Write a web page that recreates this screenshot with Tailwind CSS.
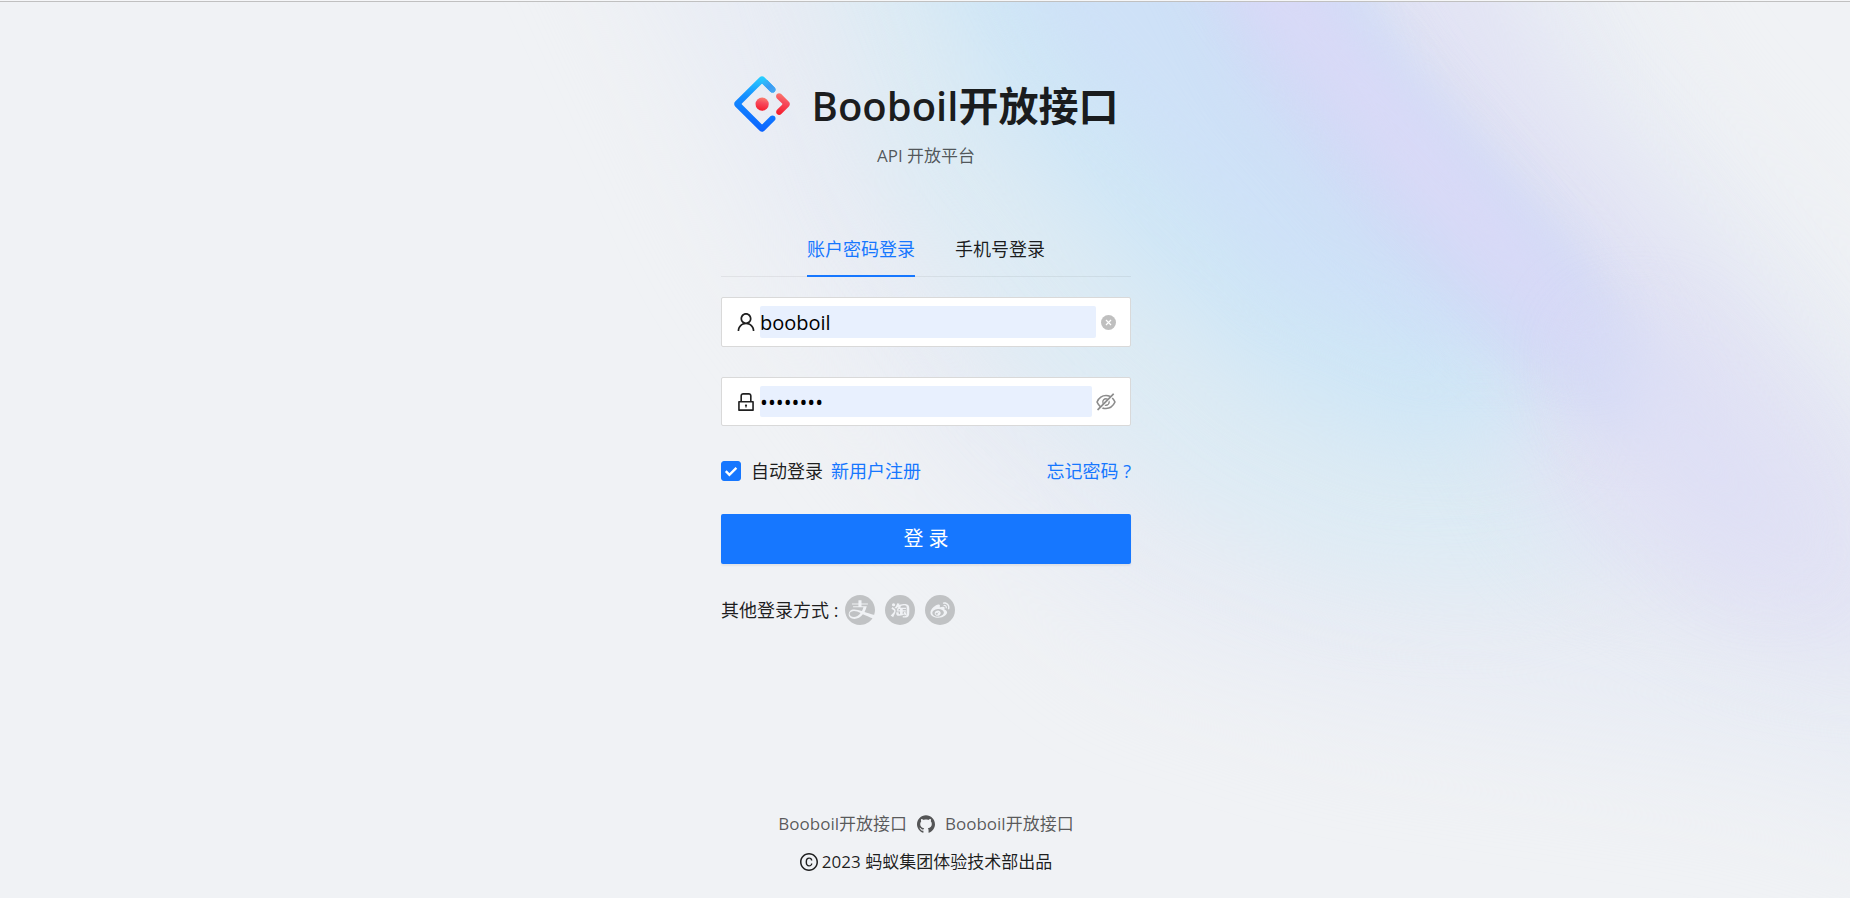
<!DOCTYPE html>
<html lang="zh-CN">
<head>
<meta charset="utf-8">
<title>Booboil开放接口</title>
<script src="https://cdn.jsdelivr.net/npm/@tailwindcss/browser@4"></script>
</head>
<body class="relative isolate flex min-h-screen flex-col overflow-x-hidden bg-[#f0f2f5] font-['Open_Sans','Noto_Sans_CJK_SC',sans-serif] text-[18px] leading-7 text-black/88">

<!-- Soft aurora backdrop -->
<svg class="absolute inset-0 -z-10 h-full w-full" viewBox="0 0 1850 898" preserveAspectRatio="none" aria-hidden="true">
  <defs>
    <filter id="soft" filterUnits="userSpaceOnUse" x="-300" y="-400" width="2600" height="1700" color-interpolation-filters="sRGB"><feGaussianBlur stdDeviation="55"/></filter>
    <filter id="mid" filterUnits="userSpaceOnUse" x="-300" y="-400" width="2600" height="1700" color-interpolation-filters="sRGB"><feGaussianBlur stdDeviation="42"/></filter>
    <filter id="fine" filterUnits="userSpaceOnUse" x="-300" y="-400" width="2600" height="1700" color-interpolation-filters="sRGB"><feGaussianBlur stdDeviation="28"/></filter>
  </defs>
  <rect width="1850" height="898" fill="#f0f2f5"/>
  <path filter="url(#soft)" fill="#e8ecf4" d="M560 -200L1500 -200L1660 100L1850 310L2050 560L2050 860L1750 770L1350 710L1130 640L930 460L760 230Z"/>
  <path filter="url(#mid)" fill="#ddebf4" d="M780 -200L1300 -200L1500 200L1700 400L1700 520L1500 590L1340 580L1180 510L1020 380L880 180Z"/>
  <path filter="url(#mid)" fill="#e2e3f4" d="M1230 -200L1400 -200L1560 90L1740 300L1890 480L1900 660L1760 640L1560 530L1400 250Z"/>
  <path filter="url(#mid)" fill="#cfe6f6" d="M860 -200L1200 -200L1350 180L1500 330L1560 430L1400 450L1280 400L1130 270L990 110Z"/>
  <path filter="url(#fine)" fill="#cee1f7" d="M940 -200L1240 -200L1420 100L1550 270L1550 350L1430 350L1280 290L1150 150L1030 0Z"/>
  <path filter="url(#fine)" fill="#d2daf6" d="M1120 -200L1220 -200L1390 60L1570 240L1650 350L1680 430L1600 430L1500 340L1370 220L1260 90Z"/>
  <path filter="url(#fine)" fill="#dad9f7" d="M1140 -200L1220 -200L1320 0L1410 100L1520 230L1600 330L1590 370L1510 290L1420 200L1330 90L1250 0Z"/>
  <path filter="url(#mid)" fill="#dedff5" d="M1590 340L1660 330L1780 470L1810 570L1740 560L1640 470Z"/>
</svg>

<div class="h-0.5 border-b border-[#c0c0c0] bg-[#f5f6f8]"></div>

<main class="flex flex-1 flex-col items-center pt-18 pl-0.5">
  <header class="flex flex-col items-center">
    <div class="flex items-center gap-5.5">
      <svg class="size-14" viewBox="0 0 200 200" aria-hidden="true">
        <defs>
          <linearGradient id="lg2" x1="50%" y1="0%" x2="40%" y2="100%"><stop offset="0" stop-color="#29cdff"/><stop offset=".38" stop-color="#148eff"/><stop offset="1" stop-color="#0a60ff"/></linearGradient>
          <linearGradient id="lg3" x1="60%" y1="0%" x2="40%" y2="100%"><stop offset="0" stop-color="#fa816e"/><stop offset=".41" stop-color="#f74a5c"/><stop offset="1" stop-color="#f51d2c"/></linearGradient>
          <linearGradient id="lg4" x1="0%" y1="0%" x2="100%" y2="100%"><stop offset="0" stop-color="#29cdff"/><stop offset=".6" stop-color="#3a9bf3"/><stop offset="1" stop-color="#4aa8f2"/></linearGradient>
        </defs>
        <path fill="url(#lg2)" d="M91.588 4.177L4.18 91.513c-4.7 4.695-4.7 12.279 0 16.974l87.408 87.336c4.7 4.696 12.289 4.696 16.989 0l36.648-36.618c4.209-4.205 4.209-11.023 0-15.228s-11.031-4.205-15.24 0l-27.783 27.76c-1.17 1.169-2.945 1.169-4.114 0L28.286 101.993c-1.17-1.168-1.17-2.942 0-4.111l69.802-69.744c1.169-1.169 2.944-1.169 4.114 0l27.783 27.76c4.209 4.205 11.031 4.205 15.24 0s4.209-11.022 0-15.227L108.58 4.056C103.862-.538 96.27-.5 91.588 4.177z"/>
        <path fill="url(#lg4)" d="M83 43l15.088-14.862c1.169-1.169 2.944-1.169 4.114 0l27.783 27.76c4.209 4.205 11.031 4.205 15.24 0s4.209-11.022 0-15.227L119 14.5C108 12 96 24 83 43z"/>
        <path fill="url(#lg3)" d="M153.686 135.855c4.208 4.205 11.031 4.205 15.24 0l27.034-27.012c4.7-4.696 4.7-12.28 0-16.974l-27.269-27.151c-4.219-4.2-11.044-4.194-15.255.014-4.209 4.205-4.209 11.022 0 15.227l18.418 18.403c1.17 1.169 1.17 2.943 0 4.111l-18.168 18.154c-4.209 4.205-4.209 11.023 0 15.228z"/>
        <circle fill="url(#lg3)" cx="100.5" cy="100.4" r="23.6"/>
      </svg>
      <h1 class="pt-1 text-[40px] leading-14 font-semibold">Booboil<span class="font-bold">开放接口</span></h1>
    </div>
    <p class="mt-2 text-[17px] text-black/65">API 开放平台</p>
  </header>

  <form class="mt-[49px] w-[410px] max-w-full" onsubmit="return false">
    <div role="tablist" class="flex justify-center gap-10 border-b border-black/6">
      <button type="button" role="tab" aria-selected="true" class="-mb-px border-b-2 border-[#1677ff] pt-4 pb-3 text-[#1677ff]">账户密码登录</button>
      <button type="button" role="tab" aria-selected="false" class="-mb-px border-b-2 border-transparent pt-4 pb-3">手机号登录</button>
    </div>

    <div class="mt-5 flex h-[50px] items-center gap-1 rounded-xs border border-[#d9d9d9] bg-white px-3.5">
      <label for="user" aria-label="用户名"><svg class="size-5" viewBox="64 64 896 896" fill="currentColor"><path d="M858.5 763.6a374 374 0 00-80.6-119.5 375.63 375.63 0 00-119.5-80.6c-.4-.2-.8-.3-1.2-.5C719.5 518 760 444.7 760 362c0-137-111-248-248-248S264 225 264 362c0 82.7 40.5 156 102.8 201.1-.4.2-.8.3-1.2.5-44.8 18.9-85 46-119.5 80.6a375.63 375.63 0 00-80.6 119.5A371.7 371.7 0 00136 901.8a8 8 0 008 8.2h60c4.4 0 7.9-3.5 8-7.8 2-77.2 33-149.5 87.8-204.3 56.7-56.7 132-87.9 212.2-87.9s155.5 31.2 212.2 87.9C779 752.7 810 825 812 902.2c.1 4.4 3.6 7.8 8 7.8h60a8 8 0 008-8.2c-1-47.8-10.9-94.3-29.5-138.2zM512 534c-45.9 0-89.1-17.9-121.6-50.4S340 407.9 340 362c0-45.9 17.9-89.1 50.4-121.6S466.1 190 512 190s89.1 17.9 121.6 50.4S684 316.1 684 362c0 45.9-17.9 89.1-50.4 121.6S557.9 534 512 534z"/></svg></label>
      <input id="user" type="text" value="booboil" class="h-8 min-w-0 flex-1 rounded-xs bg-[#e8f0fe] text-xl text-black outline-none">
      <button type="button" aria-label="清除" class="ml-px text-black/25"><svg class="size-[15px]" viewBox="64 64 896 896"><circle cx="512" cy="512" r="448" fill="currentColor"/><path d="M361 361l302 302M663 361L361 663" stroke="#fff" stroke-width="72"/></svg></button>
    </div>

    <div class="mt-[30px] flex h-[49px] items-center gap-1 rounded-xs border border-[#d9d9d9] bg-white px-3.5">
      <label for="pass" aria-label="密码"><svg class="size-5" viewBox="64 64 896 896" fill="currentColor"><path d="M832 464h-68V240c0-70.7-57.3-128-128-128H388c-70.7 0-128 57.3-128 128v224h-68c-17.7 0-32 14.3-32 32v384c0 17.7 14.3 32 32 32h640c17.7 0 32-14.3 32-32V496c0-17.7-14.3-32-32-32zM332 240c0-30.9 25.1-56 56-56h248c30.9 0 56 25.1 56 56v224H332V240zm460 600H232V536h560v304zM484 701v53c0 4.4 3.6 8 8 8h40c4.4 0 8-3.6 8-8v-53a48.01 48.01 0 10-56 0z"/></svg></label>
      <input id="pass" type="password" value="password" class="h-[31px] min-w-0 flex-1 rounded-xs bg-[#e8f0fe] text-[21px] text-black outline-none">
      <button type="button" aria-label="显示密码" class="text-black/45"><svg class="size-5" viewBox="64 64 896 896" fill="currentColor"><path d="M942.2 486.2Q889.47 375.11 816.7 305l-50.88 50.88C807.31 395.53 843.45 447.4 874.7 512 791.5 684.2 673.4 766 512 766q-72.67 0-133.87-22.38L323 798.75Q408 838 512 838q288.3 0 430.2-300.3a60.29 60.29 0 000-51.5zm-63.57-320.64L836 122.88a8 8 0 00-11.32 0L715.31 232.2Q624.86 186 512 186q-288.3 0-430.2 300.3a60.3 60.3 0 000 51.5q56.69 119.4 136.5 191.41L112.48 835a8 8 0 000 11.31L155.17 889a8 8 0 0011.31 0l712.15-712.12a8 8 0 000-11.32zM149.3 512C232.6 339.8 350.7 258 512 258c54.54 0 104.13 9.36 149.12 28.39l-70.3 70.3a176 176 0 00-238.13 238.13l-83.42 83.42C223.1 637.49 183.3 582.28 149.3 512zm246.7 0a112.11 112.11 0 01146.2-106.69L401.31 546.2A112 112 0 01396 512z"/><path d="M508 624c-3.46 0-6.87-.16-10.25-.47l-52.82 52.82a176.09 176.09 0 00227.42-227.42l-52.82 52.82c.31 3.38.47 6.79.47 10.25a111.94 111.94 0 01-112 112z"/></svg></button>
    </div>

    <div class="mt-[31px] flex items-center">
      <span class="relative size-5">
        <input id="auto" type="checkbox" checked class="peer block size-5 appearance-none rounded-[3px] border border-[#d9d9d9] bg-white checked:border-[#1677ff] checked:bg-[#1677ff]">
        <svg class="pointer-events-none absolute inset-0 hidden size-5 peer-checked:block" viewBox="0 0 20 20" fill="none" stroke="#fff" stroke-width="2.4"><path d="M4.8 10.2l3.6 3.6 7-7"/></svg>
      </span>
      <label for="auto" class="pl-2.5">自动登录</label>
      <a href="#" class="ml-2 text-[#1677ff]">新用户注册</a>
      <a href="#" class="ml-auto text-[#1677ff]">忘记密码 ?</a>
    </div>

    <button type="submit" class="mt-[29px] h-[50px] w-full rounded-xs bg-[#1677ff] text-xl text-white shadow-[0_2px_2px_rgba(0,0,0,0.06)]">登 录</button>

    <div class="mt-[31px] flex items-center gap-[7px]">
      <span>其他登录方式 :</span>
      <div class="flex gap-2.5">
      <a href="#" aria-label="支付宝" class="text-[#c0c2c4]"><svg class="size-[30px]" viewBox="64 64 896 896" fill="currentColor"><path d="M308.6 545.7c-19.8 2-57.1 10.7-77.4 28.6-61 53-24.5 150 99 150 71.8 0 143.5-45.7 199.8-119-80.2-38.9-148.1-66.8-221.4-59.6zm460.5 67c100.1 33.4 154.7 43 166.7 44.8A445.9 445.9 0 00960 512c0-247.4-200.6-448-448-448S64 264.6 64 512s200.6 448 448 448c155.9 0 293.2-79.7 373.5-200.5-75.6-29.8-213.6-85-286.8-120.1-69.9 85.7-160.1 137.8-253.7 137.8-158.4 0-212.1-138.1-137.2-229 16.3-19.8 44.2-38.7 87.3-49.4 67.5-16.5 175 10.3 275.7 43.4 18.1-33.3 33.4-69.9 44.7-108.9H305.1V402h160v-56.2H271.3v-31.3h193.8v-80.1s0-13.5 13.7-13.5H557v93.6h191.7v31.3H557.1V402h156.4c-15 61.1-37.7 117.4-66.2 166.8 47.5 17.1 90.1 33.3 121.8 43.9z"/></svg></a>
      <a href="#" aria-label="淘宝" class="text-[#c0c2c4]"><svg class="size-[30px]" viewBox="64 64 896 896"><circle cx="512" cy="512" r="448" fill="currentColor"/><path transform="translate(512 522) scale(.7) translate(-512 -512)" fill="#f0f2f5" d="M168.5 273.7a68.7 68.7 0 10137.4 0 68.7 68.7 0 10-137.4 0zm730 79.2s-23.7-184.4-426.9-70.1c17.3-30 25.6-49.5 25.6-49.5L396.4 205s-40.6 132.6-113 194.4c0 0 70.1 40.6 69.4 39.4 20.1-20.1 38.2-40.6 53.7-60.4 16.1-7 31.5-13.6 46.7-19.8-18.6 33.5-48.7 83.8-78.8 115.6l42.4 37s28.8-27.7 60.4-61.2h36v61.8H372.9v49.5h140.3v118.5c-1.7 0-3.6 0-5.4-.2-15.4-.7-39.5-3.3-49-18.2-11.5-18.1-3-51.5-2.4-71.9h-97l-3.4 1.8s-35.5 159.1 102.3 155.5c129.1 3.6 203-36 238.6-63.1l14.2 52.6 79.6-33.2-53.9-131.9-64.6 20.1 12.1 45.2c-16.6 12.4-35.6 21.7-56.2 28.4V561.3h137.1v-49.5H628.1V450h137.6v-49.5H521.3c17.6-21.4 31.5-41.1 35-53.6l-42.5-11.6c182.8-65.5 284.5-54.2 283.6 53.2v282.8s10.8 97.1-100.4 90.1l-60.2-12.9-14.2 57.1S882.5 880 903.7 680.2c21.3-200-5.2-327.3-5.2-327.3zm-707.4 18.3l-45.4 69.7 83.6 52.1s56 28.5 29.4 81.9C233.8 625.5 112 736.3 112 736.3l109 68.1c75.4-163.7 70.5-142 89.5-200.7 19.5-60.1 23.7-105.9-9.4-139.1-42.4-42.6-47-46.6-110-93.4z"/></svg></a>
      <a href="#" aria-label="微博" class="text-[#c0c2c4]"><svg class="size-[30px]" viewBox="64 64 896 896"><circle cx="512" cy="512" r="448" fill="currentColor"/><path transform="translate(512 512) scale(.66) translate(-512 -512)" fill="#f0f2f5" d="M457.3 543c-68.1-17.7-145 16.2-174.6 76.2-30.1 61.2-1 129.1 67.8 151.3 71.2 23 155.2-12.2 184.4-78.3 28.7-64.6-7.2-131-77.6-149.2zm-52 156.2c-13.8 22.1-43.5 31.7-65.8 21.6-22-10-28.5-35.7-14.6-57.2 13.7-21.4 42.3-31 64.4-21.7 22.4 9.5 29.6 35 16 57.3zm45.5-58.5c-5 8.6-16.1 12.7-24.7 9.1-8.5-3.5-11.2-13.1-6.4-21.5 5-8.4 15.6-12.4 24.1-9.1 8.7 3.2 11.8 12.9 7 21.5zm334.5-197.2c15 4.8 31-3.4 35.9-18.3 11.8-36.6 4.4-78.4-23.2-109a111.39 111.39 0 00-106-34.3 28.45 28.45 0 00-21.9 33.8 28.39 28.39 0 0033.8 21.8c18.4-3.9 38.3 1.8 51.9 16.7a54.2 54.2 0 0111.3 53.3 28.45 28.45 0 0018.2 36zm99.8-206c-56.7-62.9-140.4-86.9-217.7-70.5a32.98 32.98 0 00-25.4 39.3 33.12 33.12 0 0039.3 25.5c55-11.7 114.4 5.4 154.8 50.1 40.3 44.7 51.2 105.7 34 159.1-5.6 17.4 3.9 36 21.3 41.7 17.4 5.6 36-3.9 41.6-21.2v-.1c24.1-75.4 8.9-161.1-47.9-223.9zM729 499c-12.2-3.6-20.5-6.1-14.1-22.1 13.8-34.7 15.2-64.7.3-86-28-40.1-104.8-37.9-192.8-1.1 0 0-27.6 12.1-20.6-9.8 13.5-43.5 11.5-79.9-9.6-101-47.7-47.8-174.6 1.8-283.5 110.6C127.3 471.1 80 557.5 80 632.2 80 775.1 263.2 862 442.5 862c235 0 391.3-136.5 391.3-245 0-65.5-55.2-102.6-104.8-118zM443 810.8c-143 14.1-266.5-50.5-275.8-144.5-9.3-93.9 99.2-181.5 242.2-195.6 143-14.2 266.5 50.5 275.8 144.4C694.4 709 586 796.6 443 810.8z"/></svg></a>
      </div>
    </div>
  </form>
</main>

<footer class="flex flex-col items-center gap-2.5 pb-[22px] pl-0.5 text-[17px]">
  <nav class="flex items-center gap-2.5 text-black/65">
    <a href="#">Booboil开放接口</a>
    <a href="#" aria-label="GitHub"><svg class="size-[18px]" viewBox="64 64 896 896" fill="currentColor"><path d="M511.6 76.3C264.3 76.2 64 276.4 64 523.5 64 718.9 189.3 885 363.8 946c23.5 5.9 19.9-10.8 19.9-22.2v-77.5c-135.7 15.9-141.2-73.9-150.3-88.9C215 726 171.5 718 184.5 703c30.9-15.9 62.4 4 98.9 57.9 26.4 39.1 77.9 32.5 104 26 5.7-23.5 17.9-44.5 34.7-60.8-140.6-25.2-199.2-111-199.2-213 0-49.5 16.3-95 48.3-131.7-20.4-60.5 1.9-112.3 4.9-120 58.1-5.2 118.5 41.6 123.2 45.3 33-8.9 70.7-13.6 112.9-13.6 42.4 0 80.2 4.9 113.5 13.9 11.3-8.6 67.3-48.8 121.3-43.9 2.9 7.7 24.7 58.3 5.5 118 32.4 36.8 48.9 82.7 48.9 132.3 0 102.2-59 188.1-200 212.9a127.5 127.5 0 0138.1 91v112.5c.8 9 0 17.9 15 17.9 177.1-59.7 304.6-227 304.6-424.1 0-247.2-200.4-447.3-447.5-447.3z"/></svg></a>
    <a href="#">Booboil开放接口</a>
  </nav>
  <p class="flex items-center gap-1">
    <svg class="size-[18px]" viewBox="64 64 896 896" fill="currentColor" aria-hidden="true"><path d="M512 64C264.6 64 64 264.6 64 512s200.6 448 448 448 448-200.6 448-448S759.4 64 512 64zm0 820c-205.4 0-372-166.6-372-372s166.6-372 372-372 372 166.6 372 372-166.6 372-372 372zm5.6-532.7c53 0 89 33.8 93 83.4.3 4.2 3.8 7.4 8 7.4h56.7c2.6 0 4.7-2.1 4.7-4.7 0-86.7-68.4-147.4-162.7-147.4C407.4 290 344 364.2 344 486.8v52.3C344 660.8 407.4 734 517.3 734c94 0 162.7-58.8 162.7-141.4 0-2.6-2.1-4.7-4.7-4.7h-56.8c-4.2 0-7.6 3.2-8 7.3-4.2 46.1-40.1 77.8-93 77.8-65.3 0-102.1-47.9-102.1-133.6v-52.6c.1-87 37-135.5 102.2-135.5z"/></svg>
    <span>2023 蚂蚁集团体验技术部出品</span>
  </p>
</footer>
</body>
</html>
